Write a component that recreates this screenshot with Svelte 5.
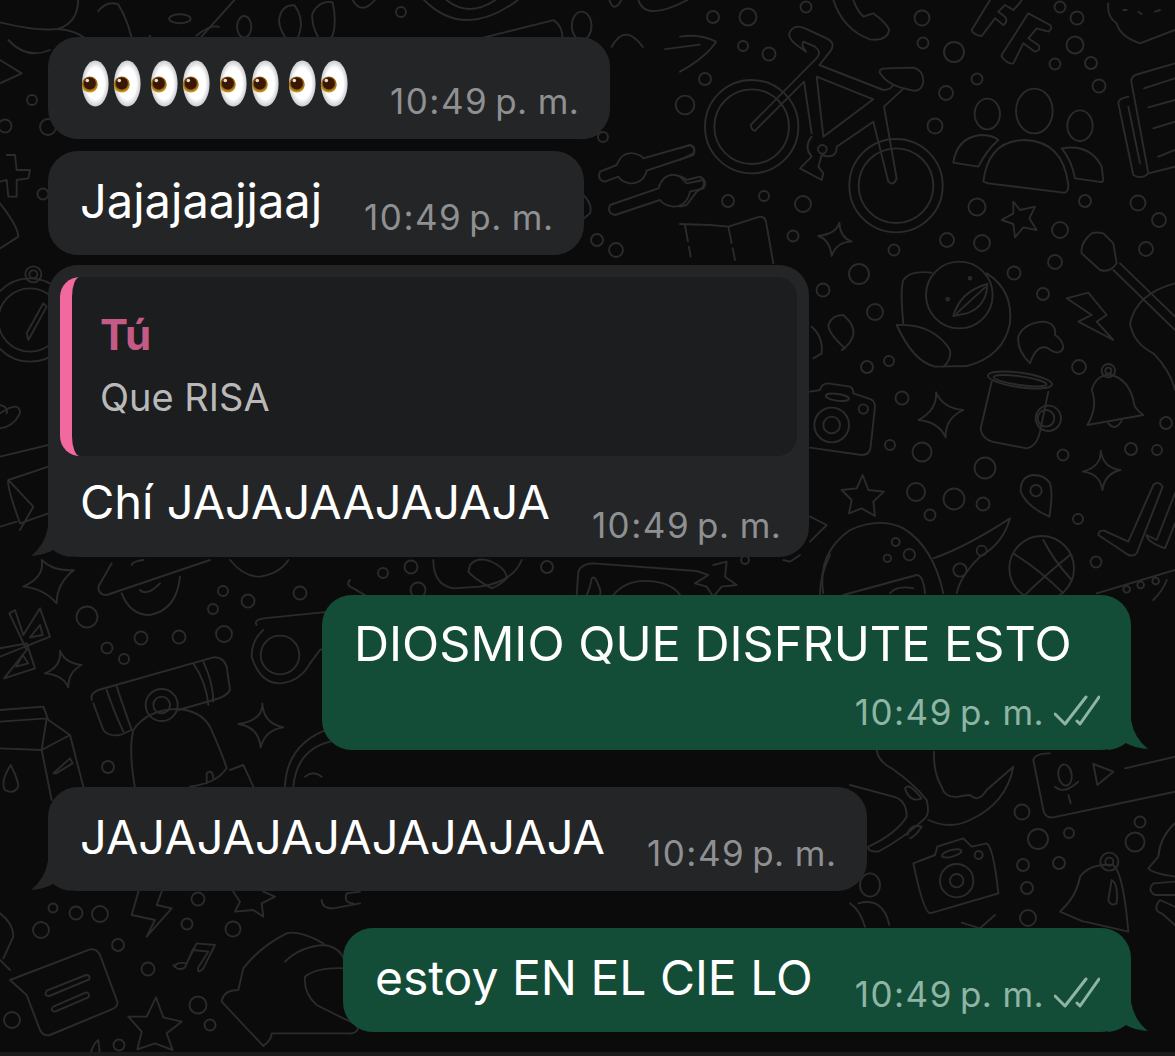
<script>
  const third = 1 / 3;

  // loose bubbles of the wallpaper, page coordinates [x, y, r]
  const dots = [
    [713,17,6],[748,17,8.5],[806,7,5.5],[743,46,5],[769,54,6.5],[705,79,6],[922,18,7.5],[923,43,5.5],[954,52,10],
    [1060,7,5.5],[1077,18,6.5],[1075,45,8.5],[1055,64,5.5],[1091,63,6],[1099,86,6.5],[977,79,5.5],[946,93,7],[935,126,7.5],
    [728,201,6],[764,196,5],[803,204,8],[977,207,8.5],[1085,201,6],[1138,203,7.5],[1159,220,7],[1060,230,8],[947,240,7],
    [982,243,8],[793,236,5.5],[894,250,5.5],[859,274,10],[823,290,6.5],[1014,273,6.5],[1055,262,7],[1043,294,6],[1146,249,7],
    [875,312,8],[867,367,6],[889,361,5],[902,398,6.5],[890,445,5],[922,452,9.5],[985,468,10.5],[1079,367,7],[1063,455,5.5],
    [1131,449,6],[1157,450,5],[1166,423,6],[916,492,9],[954,499,10.5],[983,504,6.5],[930,515,5.5],[1078,519,5],[1096,562,5.5],
    [1022,812,7.5],[1038,839,10],[1069,833,5],[1023,865,6],[1059,863,6],[1027,888,6],[1028,918,8],[1140,822,5.5],[1135,842,9.5],
    [87,617,10.5],[107,648,5.5],[124,659,5],[141,638,6.5],[179,637,6.5],[224,634,8],[223,591,5],[248,601,6.5],[213,609,5],[300,593,6.5],[108,767,6],
    [53,908,4.5],[76,913,6.5],[100,914,8],[41,930,8],[118,945,6],[198,899,6.5],[187,924,5.5],[233,929,7.5],[148,969,6.5],[198,1005,8.5],[210,1025,5.5],[12,1020,8],[119,1045,5.5],
    [603,137,5],[597,240,6],[616,250,7],[401,12,5],[383,573,5],[411,567,6.5],[547,567,6],[418,590,7.5],[745,560,4],
    [32,100,5],[5,126,6.5],[48,127,8],[43,194,5.5]
  ];

  // drawings, each in the pixel space of a 3x crop of the wallpaper
  const groups = [
    {
      x: 680, y: 0, k: third,
      rings: [[215,380,140],[215,380,112],[648,557,140],[648,557,112],[427,448,13],[15,315,28]],
      ovals: [[922,342,38,46,0],[1063,333,55,67,0],[1200,377,38,46,0]],
      paths: [
        "M225 392Q215 392 212 375L412 172Q425 155 405 140L370 125Q362 135 378 155L350 135Q325 115 328 100Q340 70 375 85L440 115Q470 130 450 155L418 195L610 270Q630 270 640 255",
        "M600 220Q595 205 620 205L700 203Q730 210 730 245Q725 275 700 272L660 262Q620 250 600 220Z",
        "M225 392L372 245L395 400","M410 230L580 298L430 410Z",
        "M668 268L612 320L650 535Q640 560 625 545L580 365L470 440",
        "M395 410Q370 440 395 470L360 505L425 540L430 520L415 500L425 465Q470 480 470 440",
        "M820 488Q830 415 900 405Q940 405 955 420Q920 450 895 500Z",
        "M910 545Q925 420 1035 420Q1150 425 1165 555Q1165 580 1150 578L925 550Z",
        "M1145 445Q1230 430 1265 500L1270 540Q1270 548 1255 545L1185 535Q1175 480 1145 445Z",
        "M1000 605L1020 630L1065 620L1048 655L1070 690L1030 682L1005 712L1000 672L965 660L1000 640Z",
        "M478 668Q470 700 415 708Q450 720 455 768Q470 725 515 725Q480 712 478 668Z",
        "M875 90Q880 105 905 108L945 55L970 75Q985 65 975 50L955 35L975 15L1000 30Q1020 10 1025 0M930 0L875 90",
        "M965 165L1045 40L1110 75Q1120 85 1105 95L1070 85L1045 115L1075 135Q1085 150 1065 155L1030 130L1000 190Q985 195 965 170Z",
        "M460 0Q490 90 570 118Q620 125 628 90Q620 70 580 40L550 50Q530 30 520 0",
        "M1485 190L1365 225Q1350 235 1355 250L1405 520Q1385 540 1360 525L1315 310Q1315 295 1345 290M1405 520L1485 500M1345 320L1380 490M1392 265L1485 235M1405 322L1485 300M1420 385L1485 365M1435 470L1485 450",
        "M0 215Q80 170 108 125Q60 100 0 110","M0 480L40 460Q50 440 30 435L0 445","M0 530L20 550L70 540Q80 560 50 575L20 615L0 620",
        "M0 672L90 675L145 680L240 650Q255 650 258 665L280 790",
        "M1285 10Q1280 50 1310 70Q1320 110 1380 130L1485 90M1330 30L1340 30M1425 35L1440 30M1375 35L1385 42",
        "M1235 700Q1200 730 1205 760L1260 810Q1290 820 1310 790L1300 730L1270 700Q1250 695 1235 700Z"
      ],
      dashed: ["M15 675L32 770M145 680L165 780"]
    },
    {
      x: 800, y: 260, k: third,
      rings: [[478,105,100],[510,55,4],[443,118,4],[745,475,38],[738,475,25],[925,332,20],[925,332,9],[95,495,52],[95,495,25],[190,447,14],[708,692,17],[725,925,97],[287,846,12],[328,884,17],[262,895,11],[545,872,15],[480,930,20],[980,988,10],[1022,975,10],[1067,963,10]],
      ovals: [[660,360,97,22,8],[660,362,80,13,8],[112,412,35,10,8]],
      paths: [
        "M310 190Q300 90 310 60Q330 30 395 38","M460 168Q480 95 562 72Q560 140 500 160ZM470 160L555 82",
        "M560 40Q640 90 630 190Q610 290 500 318L405 320Q340 305 290 195Q400 190 450 270Q455 300 430 320",
        "M135 265Q85 220 85 195Q95 165 130 165Q165 195 160 225Q150 255 125 270Z","M35 200Q70 230 65 280L40 295",
        "M800 115L865 98L920 165L890 185L940 240L835 185L875 165Z",
        "M690 310Q650 270 655 230Q670 190 730 185Q770 190 765 225Q790 240 790 265Q775 290 745 265Q710 250 690 310Z",
        "M575 365L542 505Q545 540 590 548L680 565Q710 560 720 515L745 395",
        "M862 495Q895 440 875 390Q890 340 935 345Q985 360 1000 420Q1000 445 1030 465ZM925 490Q945 515 965 482",
        "M30 395L60 390Q65 370 85 370L150 380Q160 385 160 400L205 415Q225 420 225 440L212 560Q210 585 185 585L30 563",
        "M408 397Q412 450 355 480Q415 485 437 532Q435 475 490 450Q430 445 408 397Z",
        "M902 572Q905 620 848 635Q900 640 907 690Q915 640 962 630Q910 625 902 572Z",
        "M188 645L205 690L252 695L220 725L225 768L185 745L147 760L155 720L125 690L170 685Z",
        "M700 645Q660 650 662 695Q680 740 748 770Q760 700 750 670Q735 645 700 645Z",
        "M895 825Q895 810 912 812L985 845L1060 675Q1075 660 1088 680L1010 880Q1000 890 985 885Z",
        "M1040 825L1070 840L1125 700M1040 825Q1040 845 1095 865L1125 790",
        "M640 880Q720 930 790 1000M730 840Q760 900 815 960M810 885Q730 950 670 1010",
        "M70 1000Q50 880 150 810Q240 770 310 805Q400 860 430 1000",
        "M400 895Q500 860 630 775Q610 850 540 890Q480 950 470 1000",
        "M30 770L80 795L30 845","M130 1005L350 945Q370 945 375 1000","M270 1000Q290 975 340 985",
        "M890 1000L1125 930M1100 960Q1090 990 1060 1020",
        "M940 30L1125 210M960 10L1125 170M1125 70Q1010 100 990 190Q1000 250 1060 280Q1110 330 1125 390"
      ]
    },
    {
      x: 850, y: 740, k: third,
      rings: [[320,422,50],[320,422,20],[386,345,12],[778,365,27],[778,365,12]],
      ovals: [[645,105,20,32,-8],[305,340,30,10,-15],[60,435,30,35,0]],
      paths: [
        "M600 40Q555 40 550 60L580 210Q585 235 610 232L975 155","M825 85L975 50",
        "M615 140Q640 165 685 125M655 165L662 190","M730 72L790 95L742 135Z",
        "M80 30Q85 65 125 85Q190 130 230 180Q240 220 225 235Q160 295 85 335Q50 335 55 320Q140 280 170 230Q170 180 130 170L0 135",
        "M165 145Q175 125 215 175Q180 190 165 145","M172 285Q180 250 215 260Q195 290 180 295",
        "M252 35Q250 100 275 140Q285 175 325 170Q345 165 360 165Q385 190 410 150L490 80Q470 190 360 240Q300 270 235 240",
        "M190 370L255 345L262 320L340 295L365 320L410 310Q430 320 445 460L240 520Q220 515 190 370Z",
        "M25 490Q100 470 118 555M0 490Q30 510 45 560",
        "M630 515Q680 470 690 410Q720 370 790 375Q820 400 835 575L705 545M630 515L700 545",
        "M785 420Q805 430 800 490Q780 500 775 480Z",
        "M975 250Q930 290 925 350L895 385Q905 400 975 410M975 425L910 430Q890 450 915 465L975 465M975 500L930 480Q905 510 935 520L975 555",
        "M335 548L390 565L435 525"
      ]
    },
    {
      x: 0, y: 560, k: third,
      rings: [[485,435,48],[485,435,25],[840,285,58]],
      ovals: [],
      paths: [
        "M125 0Q135 50 70 80Q130 85 170 130Q170 70 222 30Q160 35 125 0",
        "M0 290L150 230L120 145L70 225L45 150L28 160L80 270L12 355L105 325L80 250L0 265",
        "M90 232L120 195L128 225Z","M48 320L68 285L85 310Z",
        "M180 272Q185 320 135 340Q190 345 205 382Q205 335 245 315Q195 310 180 272",
        "M275 420Q270 400 295 390L640 292Q670 290 680 320L690 390Q680 410 640 420L535 450M280 430L310 510Q325 530 360 525L395 510",
        "M320 390Q340 450 370 515M350 380Q370 440 395 510M580 310Q620 370 625 435M610 305Q640 370 640 425",
        "M405 685Q385 570 400 510Q440 450 530 447Q600 450 630 500Q670 590 680 625Q650 670 570 680M620 670L620 640Q640 625 640 660M690 630L730 615L760 680",
        "M0 450L130 440L145 480L210 525L250 680M0 485L140 475L125 570L0 565M125 570L155 720M210 525L125 570",
        "M160 640L210 595L218 610L168 640Z","M32 615Q0 665 15 690Q40 705 55 680Q55 660 32 615Z",
        "M787 430Q790 480 715 492Q775 500 782 562Q795 510 850 502Q790 490 787 430Z",
        "M335 10L295 80Q295 105 320 105L630 0","M365 100Q390 165 450 165Q530 150 540 50","M420 90Q440 110 480 70","M395 15Q395 5 430 0","M690 0Q730 50 780 50Q840 40 865 0",
        "M770 195Q760 180 790 175L990 155M790 210Q755 240 755 290Q780 370 840 370Q900 365 930 310L960 270L990 260",
        "M990 505Q860 550 855 680M990 545Q890 570 880 680M915 650Q940 630 965 650"
      ]
    },
    {
      x: 0, y: 880, k: third,
      rings: [],
      ovals: [],
      paths: [
        "M0 100Q40 130 40 170L10 235M0 240L30 270","M415 35L395 105L465 120L440 170L515 85L470 75L485 35",
        "M700 35L720 65L705 95L760 90L790 110L785 70L825 50L790 35",
        "M30 300L270 208Q290 205 300 225L352 365Q355 380 335 388L150 465Q130 470 120 450L80 345Z",
        "M140 332L258 285Q272 285 268 298L148 348Q130 348 140 332Z","M160 380L258 337Q272 340 265 352L165 395Q148 392 160 380Z",
        "M525 260Q525 245 560 250L590 190L645 195L610 265Q590 285 595 262L625 215L580 210M520 255Q535 275 555 262L580 205",
        "M468 352L490 412L545 425L500 460L518 510L465 490L412 508L425 455L385 410L440 410Z",
        "M970 190Q900 150 860 160Q780 200 730 265L715 330Q670 330 665 365L740 445L790 498Q815 480 815 460L1040 460Q1075 465 1075 435L1030 415Q990 395 950 375Q910 340 915 290Q950 260 1040 265Q1030 200 970 195Q900 200 855 245",
        "M965 60Q965 85 1000 85L1080 70M1080 35L1040 40Q1030 70 1060 70","M270 525Q280 490 295 480L300 525"
      ]
    },
    {
      x: 0, y: 0, k: 0.4464,
      rings: [],
      ovals: [[403,42,24,10,0],[547,60,16,24,0],[1303,58,22,32,0]],
      paths: [
        "M0 50Q80 70 130 65Q175 50 175 0","M130 65Q190 70 210 110","M220 25Q240 0 265 10Q290 50 300 110",
        "M655 105Q625 70 625 45Q630 10 660 12Q680 40 672 70Q665 95 655 105","M725 105Q695 60 700 30Q715 0 745 5Q755 50 745 80Z",
        "M335 80Q345 100 390 95Q410 105 440 95Q480 50 525 0","M440 80Q470 55 490 60","M1000 105L1240 45Q1265 60 1260 105",
        "M770 105Q800 95 810 100Q830 70 858 105","M950 0Q1040 90 1160 0","M1000 0Q1050 40 1110 0","M790 0Q810 35 840 0",
        "M1365 0Q1375 30 1392 0","M1430 0Q1445 50 1540 0","M1370 105Q1400 50 1440 105","M1490 110L1568 100"
      ]
    },
    {
      x: 580, y: 130, k: third,
      rings: [],
      ovals: [],
      paths: [
        "M60 125L110 105Q125 65 160 70Q185 75 190 85L330 45Q350 55 340 75L200 122Q190 160 150 160Q125 155 115 140L75 155Q50 150 60 125Z",
        "M90 225L235 175Q250 130 285 135Q310 140 320 150L360 140Q385 155 370 175L330 185Q320 230 280 230Q250 225 240 210L105 255Q80 250 90 225Z",
        "M0 185Q40 220 30 250L0 275","M0 25Q40 25 60 5"
      ]
    },
    {
      x: 330, y: 555, k: third,
      rings: [],
      ovals: [],
      paths: [
        "M420 30Q440 5 480 18Q530 40 530 70Q510 90 485 100Q430 70 415 50Z","M310 15Q310 90 370 100L450 95Q550 80 575 15",
        "M60 75Q45 90 70 100L130 135","M740 120L745 50Q755 25 790 25L1100 48",
        "M1150 30L1190 20L1185 65L1220 90L1175 95L1150 125L1130 95L1095 85L1135 60L1100 48",
        "M770 120Q780 100 785 70Q795 60 805 90Q815 110 810 120","M850 120Q900 60 1000 85Q1040 100 1050 120",
        "M1470 120Q1470 60 1500 0","M1360 15L1380 20L1410 0"
      ]
    },
    {
      x: 0, y: 40, k: third,
      rings: [[90,840,125],[90,840,95],[100,703,24],[100,703,12]],
      ovals: [],
      paths: [
        "M80 880L130 790L140 800L85 900Z","M25 0Q80 60 150 30","M0 60L65 100L0 130",
        "M20 345L45 345L50 390L90 390L85 415L50 420L50 470L25 470L20 420L0 425","M0 490Q55 560 55 590L0 625",
        "M0 1120Q60 1080 60 1120Q40 1160 0 1165M0 1095Q25 1100 20 1120","M0 1250L145 1215",
        "M145 1280L25 1320Q20 1340 60 1450L145 1420M25 1320L100 1400M0 1460L50 1445M100 1400L60 1470"
      ]
    }
  ];

  const eyePairs = [0, 1, 2, 3];
</script>

{#snippet stamp(read)}
  <span class="stamp">
    <span class="clock">10:49</span><span class="meridiem">p. m.</span>
    {#if read}
      <svg class="ticks" viewBox="0 0 46 34" width="46" height="34" aria-hidden="true">
        <path d="M1 19l10 10L32 2M23 26l3 3L45 2" />
      </svg>
    {/if}
  </span>
{/snippet}

{#snippet tailIn()}
  <svg class="tail tail-in" viewBox="0 0 40 50" width="40" height="50" aria-hidden="true">
    <path d="M17 0L17 20Q14 38 0 49Q14 48 22 43Q30 49 40 50L40 0Z" />
  </svg>
{/snippet}

{#snippet tailOut()}
  <svg class="tail tail-out" viewBox="0 0 40 50" width="40" height="50" aria-hidden="true">
    <path d="M23 0L23 20Q26 38 40 49Q26 48 18 43Q10 49 0 50L0 0Z" />
  </svg>
{/snippet}

<div class="chat">
  <svg class="wallpaper" viewBox="0 0 1175 1056" width="1175" height="1056" aria-hidden="true">
    {#each dots as [cx, cy, r]}
      <circle {cx} {cy} {r} />
    {/each}
    {#each groups as g}
      <g transform={`translate(${g.x} ${g.y}) scale(${g.k})`} stroke-width={1.9 / g.k}>
        {#each g.rings as [cx, cy, r]}
          <circle {cx} {cy} {r} />
        {/each}
        {#each g.ovals as [cx, cy, rx, ry, turn]}
          <ellipse {cx} {cy} {rx} {ry} transform={`rotate(${turn} ${cx} ${cy})`} />
        {/each}
        {#each g.paths as d}
          <path {d} />
        {/each}
        {#each g.dashed ?? [] as d}
          <path {d} stroke-dasharray="50 16" />
        {/each}
      </g>
    {/each}
  </svg>

  <div class="bubble in first">
    <span class="eyes" aria-label="ojos">
      {#each eyePairs as i (i)}
        <svg viewBox="0 0 59 47" width="59" height="47" aria-hidden="true">
          <defs>
            <radialGradient id={`white-${i}`} cx="50%" cy="50%" r="55%">
              <stop offset="62%" stop-color="#ffffff" />
              <stop offset="100%" stop-color="#b9bbc0" />
            </radialGradient>
            <radialGradient id={`iris-${i}`} cx="50%" cy="42%" r="55%">
              <stop offset="55%" stop-color="#6b3a10" />
              <stop offset="100%" stop-color="#c89a1c" />
            </radialGradient>
          </defs>
          {#each [13.3, 45.3] as cx}
            <ellipse {cx} cy="23.5" rx="13.3" ry="23" fill={`url(#white-${i})`} />
            <circle cx={cx - 5.5} cy="24.5" r="8" fill={`url(#iris-${i})`} />
            <circle cx={cx - 5.5} cy="23.5" r="6" fill="#3a1703" />
            <circle cx={cx - 8} cy="20.5" r="1.8" fill="#e8dcd4" />
          {/each}
        </svg>
      {/each}
    </span>
    {@render stamp(false)}
  </div>

  <div class="bubble in second">
    <span class="text">Jajajaajjaaj</span>
    {@render stamp(false)}
  </div>

  <div class="bubble in reply">
    <div class="quote">
      <strong>Tú</strong>
      <span>Que RISA</span>
    </div>
    <div class="line">
      <span class="text">Chí JAJAJAAJAJAJA</span>
      {@render stamp(false)}
    </div>
    {@render tailIn()}
  </div>

  <div class="bubble out stacked">
    <span class="text">DIOSMIO QUE DISFRUTE ESTO</span>
    {@render stamp(true)}
    {@render tailOut()}
  </div>

  <div class="bubble in solo">
    <span class="text">JAJAJAJAJAJAJAJAJA</span>
    {@render stamp(false)}
    {@render tailIn()}
  </div>

  <div class="bubble out solo">
    <span class="text">estoy EN EL CIE LO</span>
    {@render stamp(true)}
    {@render tailOut()}
  </div>
</div>

<style>
  :global(body) {
    margin: 0;
    background: #0b0b0c;
  }

  .chat {
    position: relative;
    box-sizing: border-box;
    width: 1175px;
    height: 1056px;
    padding: 37px 44px 0 48px;
    display: flex;
    flex-direction: column;
    overflow: hidden;
    background: #0b0b0c;
    border-bottom: 4px solid #1b1b1d;
    font-family: Inter, "Liberation Sans", sans-serif;
    color: #fff;
  }

  .wallpaper {
    position: absolute;
    inset: 0;
    fill: none;
    stroke: #2b2b2c;
    stroke-width: 1.9;
    stroke-linecap: round;
    stroke-linejoin: round;
  }

  .bubble {
    position: relative;
    flex-shrink: 0;
    box-sizing: border-box;
    display: flex;
    align-items: flex-end;
    min-height: 104px;
    padding: 0 31px 0 32px;
    border-radius: 30px;
    background: #242527;
    width: fit-content;
  }

  .first {
    height: 102px;
    min-height: 0;
    margin-bottom: 12px;
    padding-left: 34px;
  }

  .second {
    margin-bottom: 10px;
  }

  .reply {
    display: block;
    width: 761px;
    padding: 12px 12px 0;
    height: 292px;
    margin-bottom: 38px;
  }

  .out {
    align-self: flex-end;
    background: #144d37;
  }

  .stacked {
    display: block;
    width: 809px;
    height: 155px;
    margin-bottom: 37px;
    padding-top: 21px;
  }

  .stacked .stamp {
    position: absolute;
    right: 31px;
    bottom: 18px;
    margin: 0;
  }

  .solo {
    margin-bottom: 37px;
  }

  .text {
    font-size: 47px;
    line-height: 56px;
    white-space: nowrap;
    align-self: center;
  }

  .stacked .text {
    font-size: 48.6px;
  }

  .out.solo .text {
    font-size: 48px;
  }

  .solo .text,
  .second .text {
    margin-bottom: 4px;
  }

  .eyes {
    display: flex;
    gap: 10px;
    align-self: flex-start;
    margin-top: 23px;
  }

  .stamp {
    display: inline-flex;
    align-items: center;
    margin-left: 42px;
    margin-bottom: 18px;
    font-size: 35px;
    line-height: 40px;
    white-space: nowrap;
    color: #8f9092;
  }

  .clock {
    letter-spacing: 1.5px;
  }

  .meridiem {
    margin-left: 7px;
    letter-spacing: 0.4px;
  }

  .out .stamp {
    color: #8fb5a5;
  }

  .ticks {
    margin-left: 10px;
    fill: none;
    stroke: #8fb5a5;
    stroke-width: 3;
    stroke-linecap: round;
    stroke-linejoin: round;
  }

  .quote {
    display: flex;
    flex-direction: column;
    box-sizing: border-box;
    height: 179px;
    padding: 35px 28px 0 28px;
    border-left: 12px solid #f2699f;
    border-radius: 20px;
    background: #1c1d1e;
  }

  .quote strong {
    font-size: 42px;
    line-height: 46px;
    font-weight: 700;
    color: #c45a86;
  }

  .quote span {
    margin-top: 19px;
    font-size: 38px;
    line-height: 40px;
    color: #b9b9b9;
  }

  .line {
    display: flex;
    align-items: flex-end;
    justify-content: space-between;
    padding: 0 19px 0 20px;
    margin-top: 18px;
  }

  .line .text {
    margin-bottom: 15px;
  }

  .line .stamp {
    margin-bottom: 0;
  }

  .tail {
    position: absolute;
    bottom: 0;
  }

  .tail-in {
    left: -17px;
    fill: #242527;
  }

  .tail-out {
    right: -17px;
    fill: #144d37;
  }
</style>
